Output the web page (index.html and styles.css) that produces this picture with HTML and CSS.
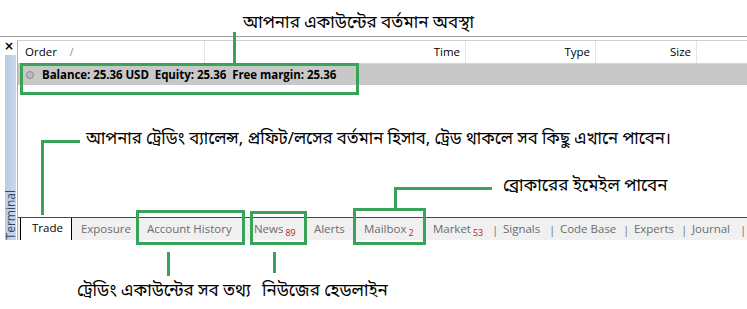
FILE: index.html
```html
<!DOCTYPE html>
<html>
<head>
<meta charset="utf-8">
<link rel="stylesheet" href="styles.css">
</head>
<body>
<div class="page">
  <div class="window">
    <div class="side">
      <div class="close">×</div>
      <div class="sidebar"><span class="sidebar-text">Terminal</span></div>
    </div>
    <div class="panel">
      <div class="thead">
        <div class="th th-order">Order <span class="sort">/</span></div>
        <div class="th th-right">Time</div>
        <div class="th th-right">Type</div>
        <div class="th th-right">Size</div>
        <div class="th th-rest"></div>
      </div>
      <div class="balance"><span class="dot"></span><span class="bal-text">Balance: 25.36 USD&nbsp; Equity: 25.36&nbsp; Free margin: 25.36</span></div>
      <div class="grid-body"></div>
      <div class="tabs">
        <div class="tab active">Trade</div>
        <div class="tab t-exposure">Exposure</div>
        <div class="tab t-history">Account History</div>
        <div class="tab t-news">News<span class="badge">89</span></div>
        <div class="tab t-alerts">Alerts</div>
        <div class="tab t-mail">Mailbox<span class="badge">2</span></div>
        <div class="tab t-market">Market<span class="badge">53</span></div>
        <div class="sep">|</div>
        <div class="tab t-signals">Signals</div>
        <div class="sep">|</div>
        <div class="tab t-code">Code Base</div>
        <div class="sep">|</div>
        <div class="tab t-experts">Experts</div>
        <div class="sep">|</div>
        <div class="tab t-journal">Journal</div>
        <div class="sep sep-last">|</div>
      </div>
    </div>
  </div>

  <div class="note note-top">আপনার একাউন্টের বর্তমান অবস্থা</div>
  <div class="gline line-top"></div>
  <div class="gbox box-balance"></div>

  <div class="gline line-trade-h"></div>
  <div class="gline line-trade-v"></div>
  <div class="note note-trade">আপনার ট্রেডিং ব্যালেন্স, প্রফিট/লসের বর্তমান হিসাব, ট্রেড থাকলে সব কিছু এখানে পাবেন।</div>

  <div class="gline line-mail-h"></div>
  <div class="gline line-mail-v"></div>
  <div class="note note-mail">ব্রোকারের ইমেইল পাবেন</div>

  <div class="gbox box-history"></div>
  <div class="gbox box-news"></div>
  <div class="gbox box-mail"></div>

  <div class="gline line-history"></div>
  <div class="gline line-news"></div>
  <div class="note note-history">ট্রেডিং একাউন্টের সব তথ্য</div>
  <div class="note note-news">নিউজের হেডলাইন</div>
</div>
</body>
</html>
```

FILE: styles.css
```css
html, body {
  margin: 0;
  padding: 0;
  background: #ffffff;
}
.page {
  position: relative;
  width: 747px;
  height: 309px;
  overflow: hidden;
  font-family: "Open Sans", "Noto Sans", sans-serif;
  font-size: 11.5px;
  color: #000;
}
.window {
  margin-top: 36px;
  border-top: 1px solid #a0a0a0;
  padding-top: 3px;
  display: flex;
}
.side {
  width: 17px;
  display: flex;
  flex-direction: column;
  align-items: flex-start;
}
.close {
  margin-left: 4px;
  height: 14px;
  line-height: 12px;
  font-size: 12px;
  font-weight: bold;
  font-family: "DejaVu Sans", sans-serif;
}
.sidebar {
  margin-top: 1px;
  margin-left: 5px;
  width: 11px;
  height: 185px;
  background: linear-gradient(to right, #b8cce4, #c9d9ec);
  display: flex;
  align-items: flex-end;
  justify-content: center;
}
.sidebar-text {
  writing-mode: vertical-rl;
  transform: rotate(180deg);
  font-size: 12px;
  line-height: 11px;
  color: #34465e;
  padding-top: 1px;
}
.panel {
  flex: 1;
  min-width: 0;
  border-left: 1px solid #b0b0b0;
  border-top: 1px solid #d0d0d0;
  display: flex;
  flex-direction: column;
}
.thead {
  display: grid;
  grid-template-columns: 187px 261px 130px 101px 1fr;
  height: 22px;
  border-bottom: 1px solid #d5d5d5;
}
.th {
  border-right: 1px solid #e6e6e6;
  line-height: 22px;
  color: #000;
  padding: 0 5px 0 7px;
  white-space: nowrap;
}
.th-right { text-align: right; }
.th-rest { border-right: none; }
.sort {
  color: #888;
  margin-left: 10px;
  font-size: 10px;
}
.balance {
  height: 21px;
  background: #c8c8c8;
  display: flex;
  align-items: center;
  padding-left: 8px;
}
.dot {
  width: 6px;
  height: 6px;
  border: 1px solid #8a8a8a;
  border-radius: 50%;
  background: #bdbdbd;
  margin-right: 8px;
}
.bal-text {
  font-weight: bold;
  font-size: 11.5px;
  letter-spacing: -0.05px;
}
.grid-body {
  height: 132px;
}
.tabs {
  border-top: 1px solid #4a4a4a;
  background: #f0f0f0;
  height: 22px;
  display: flex;
  align-items: center;
  color: #6d6d6d;
  white-space: nowrap;
  overflow: hidden;
}
.tab {
  line-height: 20px;
  flex: none;
}
.tab.active {
  margin-left: 2px;
  margin-top: -2px;
  background: #fff;
  color: #000;
  border: 1px solid #000;
  border-bottom: none;
  height: 24px;
  line-height: 22px;
  padding: 0 8px 0 11px;
  align-self: flex-start;
}
.t-exposure { width: 66px; padding-left: 9px; }
.t-history { width: 107px; }
.t-news { width: 60px; }
.t-alerts { width: 50px; }
.t-mail { width: 69px; }
.t-market { width: 58px; }
.t-signals { width: 45px; }
.t-code { width: 62px; }
.t-experts { width: 46px; }
.t-journal { width: 47px; }
.sep {
  flex: none;
  width: 11px;
  padding-left: 1px;
  color: #777;
}
.sep-last { width: 6px; }
.badge {
  color: #d01010;
  font-size: 9px;
  margin-left: 2px;
  position: relative;
  top: 3px;
}

/* annotations */
.note {
  position: absolute;
  font-family: "Noto Sans Bengali", "Noto Sans", "Lohit Bengali", sans-serif;
  font-size: 17px;
  color: #000;
  white-space: nowrap;
  line-height: 22px;
}
.gline {
  position: absolute;
  background: #3aa35a;
}
.gbox {
  position: absolute;
  border: 3px solid #3aa35a;
  box-sizing: border-box;
}
.note-top { left: 243px; top: 13px; }
.line-top { left: 233px; top: 32px; width: 3px; height: 32px; }
.box-balance { left: 20px; top: 63px; width: 339px; height: 32px; }

.line-trade-h { left: 41px; top: 140px; width: 39px; height: 3px; }
.line-trade-v { left: 41px; top: 140px; width: 3px; height: 75px; }
.note-trade { left: 86px; top: 129px; font-size: 16.7px; }

.line-mail-h { left: 394px; top: 187px; width: 98px; height: 3px; }
.line-mail-v { left: 394px; top: 187px; width: 3px; height: 23px; }
.note-mail { left: 503px; top: 176px; }

.box-history { left: 136px; top: 210px; width: 109px; height: 35px; }
.box-news { left: 250px; top: 211px; width: 57px; height: 34px; }
.box-mail { left: 353px; top: 208px; width: 73px; height: 37px; }

.line-history { left: 167px; top: 252px; width: 3px; height: 24px; }
.line-news { left: 273px; top: 252px; width: 3px; height: 21px; }
.note-history { left: 77px; top: 281px; }
.note-news { left: 262px; top: 281px; }
```
